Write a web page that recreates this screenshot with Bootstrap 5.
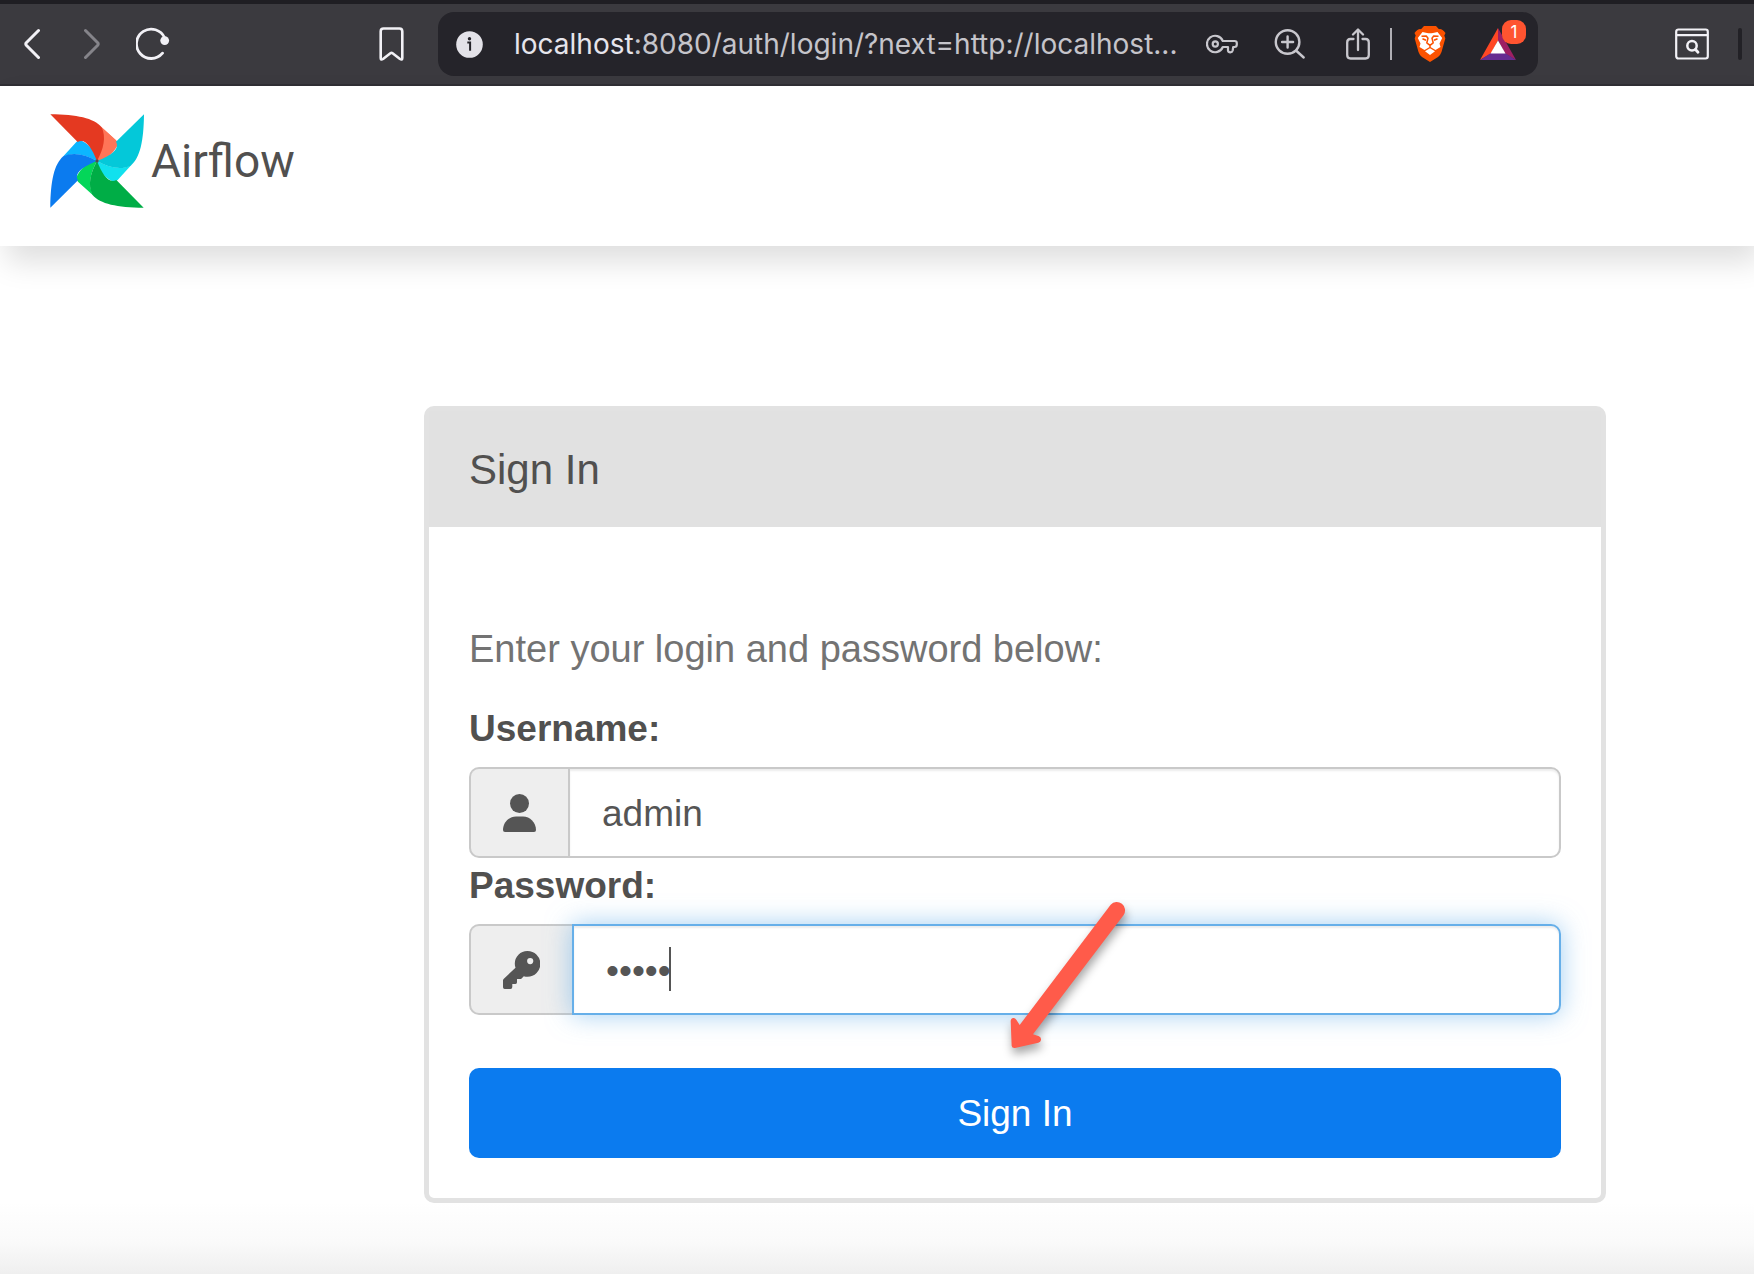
<!DOCTYPE html>
<html lang="en">
<head>
<meta charset="utf-8">
<meta name="viewport" content="width=device-width, initial-scale=1">
<title>Sign In - Airflow</title>
<link href="https://cdn.jsdelivr.net/npm/bootstrap@5.3.0/dist/css/bootstrap.min.css" rel="stylesheet">
<style>
  body { font-family: "Liberation Sans", Arial, sans-serif; color: #51504f; font-size: 37px; line-height: 52px; background: #fff; }
  svg { display: block; flex: none; }
  .icon-btn { background: none; border: 0; padding: 0; line-height: 0; }
  /* browser toolbar */
  .toolbar { background: #3b3a3f; border-top: 4px solid #1f1e23; border-bottom: 2px solid #302f34; height: 86px; }
  .tools-left { width: 404px; padding-left: 24px; margin-right: 34px; }
  .nav-pair { gap: 44px; margin-right: 36px; }
  .tools-right { width: 216px; padding-right: 12px; gap: 29px; }
  .address { background: #25242a; border-radius: 16px; height: 64px; padding: 0 22px 0 18px; min-width: 0; }
  .url-text { font-family: Inter, sans-serif; font-size: 28px; line-height: 40px; color: #c5c4ca; margin-left: 31px; }
  .url-host { color: #e6e5ec; }
  .url-tools { gap: 36px; }
  .divider { width: 2px; height: 32px; background: #b0afb5; margin: 0 22px 0 16px; }
  .edge { width: 4px; height: 32px; border-radius: 2px; background: #222126; }
  .rewards { margin-left: 34px; }
  .count { position: absolute; top: -8px; left: 22px; width: 24px; height: 24px; border-radius: 9px; background: #ff5430; color: #fff; font-family: Inter, sans-serif; font-size: 17px; line-height: 24px; text-align: center; }
  /* site header */
  .site-head { height: 160px; padding: 0 48px 10px; box-shadow: 6px 16px 28px 0 rgba(0,0,0,.13); position: relative; background: #fff; }
  .brand { color: #51504f; font-family: Roboto, sans-serif; font-size: 46px; line-height: 56px; gap: 5px; }
  /* login panel */
  .page { padding: 160px 148px 71px 424px; background: linear-gradient(to top, #efefef 0, #fafafa 32px, #fff 72px); }
  .panel { border: 5px solid #e2e2e2; border-radius: 10px; position: relative; }
  .panel-head { background: #e1e1e1; padding: 33px 40px 31px; font-size: 42px; line-height: 52px; margin: 0; font-weight: 400; }
  .panel-main { padding: 96px 40px 40px; }
  .hint { color: #737373; margin-bottom: 28px; font-size: 38px; }
  .field-label { font-weight: 700; display: block; margin-bottom: 12px; }
  .field + .field-label { margin-top: 2px; }
  .field { height: 91px; position: relative; }
  .field .input-group-text { background: #eee; border: 2px solid #c9c9c9; border-right: 0; border-radius: 10px; padding: 0 32px; color: #555; }
  .field .form-control { border: 2px solid #c9c9c9; border-radius: 0 10px 10px 0 !important; padding: 2px 32px 0; font-size: 37px; line-height: 52px; color: #555; box-shadow: inset 0 2px 2px rgba(0,0,0,.075); margin-left: 0 !important; }
  .field .form-control.active-field { border-color: #66afe9; box-shadow: inset 0 2px 2px rgba(0,0,0,.075), 0 0 26px rgba(102,175,233,.6); }
  .caret { position: absolute; left: 201px; top: 23px; width: 2px; height: 44px; background: #555; z-index: 6; }
  .sign-btn { background: #0b7bef; border: 0; border-radius: 10px; color: #fff; font-size: 37px; line-height: 52px; height: 90px; margin-top: 53px; padding: 2px 0 0; }
  .pointer { position: absolute; left: 551px; top: 469px; z-index: 7; pointer-events: none; filter: drop-shadow(1px 6px 5px rgba(0,0,0,.35)); }
</style>
<script src="https://cdn.jsdelivr.net/npm/bootstrap@5.3.0/dist/js/bootstrap.bundle.min.js"></script>
</head>
<body class="d-flex flex-column min-vh-100">

<nav class="toolbar d-flex align-items-center" aria-label="Browser toolbar">
  <div class="tools-left d-flex align-items-center flex-shrink-0">
    <div class="nav-pair d-flex">
      <button class="icon-btn" type="button" aria-label="Back"><svg width="16" height="32" viewBox="0 0 16 32" fill="none" stroke="#f2f1f6" stroke-width="3" stroke-linecap="round" stroke-linejoin="round"><path d="M14.500 2.500L2.300 14.700Q1.300 16 2.300 17.300L14.500 29.500"/></svg></button>
      <button class="icon-btn" type="button" aria-label="Forward"><svg width="16" height="32" viewBox="0 0 16 32" fill="none" stroke="#85848a" stroke-width="3" stroke-linecap="round" stroke-linejoin="round"><path d="M1.500 2.500L13.700 14.700Q14.700 16 13.700 17.300L1.500 29.500"/></svg></button>
    </div>
    <button class="icon-btn" type="button" aria-label="Reload"><svg width="34" height="34" viewBox="0 0 34 34" fill="none" stroke="#f2f1f6" stroke-width="2.800" stroke-linecap="round"><path d="M26.500 26.200A14.700 14.700 0 1 1 28.700 11"/><circle cx="28.700" cy="13.600" r="4.400" fill="#f2f1f6" stroke="none"/></svg></button>
    <button class="icon-btn ms-auto" type="button" aria-label="Bookmark"><svg width="25" height="34" viewBox="0 0 25 34" fill="none" stroke="#f2f1f6" stroke-width="2.600" stroke-linejoin="round"><path d="M4.500 1.500H20.500Q23.300 1.500 23.300 4.500V31Q23.300 33.400 21 32L13.600 26.300Q12.500 25.500 11.400 26.300L4 32Q1.700 33.400 1.700 31V4.500Q1.700 1.500 4.500 1.500Z"/></svg></button>
  </div>
  <div class="address d-flex align-items-center flex-fill">
    <svg width="27" height="27" viewBox="0 0 27 27"><circle cx="13.500" cy="13.500" r="13.300" fill="#e3e2e8"/><circle cx="13.500" cy="7.700" r="1.700" fill="#25242a"/><path d="M11.300 11.600H14.100V19.700" fill="none" stroke="#25242a" stroke-width="2"/></svg>
    <div class="url-text flex-fill text-nowrap overflow-hidden" role="textbox" aria-label="Address"><span class="url-host">localhost</span>:8080/auth/login/?next=http://localhost...</div>
    <div class="url-tools d-flex align-items-center">
      <button class="icon-btn" type="button" aria-label="Passwords"><svg width="32" height="20" viewBox="0 0 32 20" fill="none" stroke="#c8c7cd" stroke-width="2.200" stroke-linejoin="round"><circle cx="9.300" cy="10" r="2.600"/><path d="M16.800 7A8.200 8.200 0 1 0 16.800 13H22V16.500Q22.300 18.300 24.300 18.300Q26.200 18.300 26.700 16.500L27.200 13H28.500Q30.800 13 30.800 10.500V9Q30.800 7 28.500 7Z"/></svg></button>
      <button class="icon-btn" type="button" aria-label="Zoom"><svg width="32" height="32" viewBox="0 0 32 32" fill="none" stroke="#c8c7cd" stroke-width="2.400" stroke-linecap="round"><circle cx="13.600" cy="14" r="11.800"/><path d="M22 22.500L29.700 29.500M13.600 8.500V19.500M8.100 14H19.100"/></svg></button>
      <button class="icon-btn" type="button" aria-label="Share"><svg width="32" height="32" viewBox="0 0 32 32" fill="none" stroke="#c8c7cd" stroke-width="2.300" stroke-linecap="round" stroke-linejoin="round"><path d="M11.500 11H8.500Q5.200 11 5.200 14.500V27Q5.200 30.500 8.500 30.500H23.500Q26.800 30.500 26.800 27V14.500Q26.800 11 23.500 11H20.500M16 22V1.800M11 6.500L16 1.500L21 6.500"/></svg></button>
    </div>
    <div class="divider"></div>
    <button class="icon-btn" type="button" aria-label="Brave Shields"><svg width="32" height="36" viewBox="0 0 32 36"><path d="M10 0H22L25 3.200Q28 2.500 31.500 7L30.300 9.500L31.300 12.500L27.500 26Q26.500 29 24 31L16 36L8 31Q5.500 29 4.500 26L.700 12.500L1.700 9.500L.500 7Q4 2.500 7 3.200Z" fill="#fb5200"/><path d="M3.800 12L8.500 6L13 7Q16 7.600 19 7L23.500 6L28.200 12L25.500 17.500L26.500 21L21.500 24L16 20.800L10.500 24L5.500 21L6.500 17.500Z" fill="#fff"/><path d="M16 22.300L21 25.300L16 29L11 25.300Z" fill="#fff"/><path d="M7.500 10.300L12.300 10L14 12.300L12.800 16.800L16 19.300L19.200 16.800L18 12.300L19.700 10L24.500 10.300M8.500 12.800L12 14.300M23.500 12.800L20 14.300M16 19.300V21.500" fill="none" stroke="#fb5200" stroke-width="1.500" stroke-linejoin="round"/></svg></button>
    <button class="icon-btn rewards position-relative" type="button" aria-label="Brave Rewards, 1 notification"><svg width="36" height="32" viewBox="0 0 36 32"><path d="M18 0L0 32L11 25.500L18 12.500Z" fill="#ff4724"/><path d="M18 0L36 32L25 25.500L18 12.500Z" fill="#9e1f63"/><path d="M0 32H36L25 25H11Z" fill="#662d91"/><path d="M18 12.500L25.500 25.500H10.500Z" fill="#fff"/></svg><span class="count">1</span></button>
  </div>
  <div class="tools-right d-flex align-items-center justify-content-end flex-shrink-0">
    <button class="icon-btn" type="button" aria-label="Search page"><svg width="34" height="32" viewBox="0 0 34 32" fill="none" stroke="#f2f1f6" stroke-width="2.200" stroke-linecap="round"><rect x="1.200" y="1.500" width="31.600" height="29" rx="2.200"/><path d="M2 7.200H32"/><circle cx="17" cy="17.800" r="4.700" stroke-width="2.500"/><path d="M20.500 21.500L23 24.200" stroke-width="2.800"/></svg></button>
    <div class="edge"></div>
  </div>
</nav>

<header class="site-head d-flex align-items-center">
  <a class="brand d-flex align-items-center text-decoration-none" href="#">
    <svg width="98" height="98" viewBox="53 64 294 294" aria-hidden="true">
      <defs>
        <path id="blade" d="M60 71C140 72 190 82 214 110C228 140 220 175 200 211C183 168 164 142 142 154Z"/>
        <path id="fold" d="M212 108L257 149Q264 157 260 166C249 189 225 211 200 211C220 175 228 140 212 108Z"/>
      </defs>
      <use href="#fold" fill="#ff7557"/>
      <use href="#fold" fill="#11e1ee" transform="rotate(90 200 211)"/>
      <use href="#fold" fill="#04d659" transform="rotate(180 200 211)"/>
      <use href="#fold" fill="#0cb6ff" transform="rotate(270 200 211)"/>
      <path id="lip" d="M262 157C262 176 238 186 200 211L214 110L257 149Z" fill="#ff7557"/>
      <use href="#blade" fill="#e43921"/>
      <path d="M341 71C340 151 330 201 301 225C271 239 236 231 200 211C243 194 269 175 257 153Z" fill="#04c8d9"/>
      <use href="#blade" fill="#00ad46" transform="rotate(180 200 211)"/>
      <use href="#blade" fill="#0b7bef" transform="rotate(270 200 211)"/>
      <circle cx="200" cy="211" r="5" fill="#51504f"/>
    </svg>
    <span>Airflow</span>
  </a>
</header>

<main class="page flex-fill">
  <section class="panel">
    <h1 class="panel-head">Sign In</h1>
    <form class="panel-main">
      <p class="hint">Enter your login and password below:</p>
      <label class="field-label" for="username">Username:</label>
      <div class="input-group field flex-nowrap">
        <span class="input-group-text"><svg width="33" height="38" viewBox="0 0 33 38" fill="currentColor"><circle cx="16.500" cy="9.500" r="9.500"/><path d="M13 22.500H20C27 22.500 33 28.500 33 36Q33 38 31 38H2Q0 38 0 36C0 28.500 6 22.500 13 22.500Z"/></svg></span>
        <input class="form-control" id="username" type="text" value="admin">
      </div>
      <label class="field-label" for="password">Password:</label>
      <div class="input-group field flex-nowrap">
        <span class="input-group-text"><svg width="37" height="38" viewBox="0 0 37 38" fill="currentColor"><path fill-rule="evenodd" d="M24.500 0A12.600 12.600 0 0 1 24.500 25.700Q22.500 25.700 20.800 25.200L18.600 27.500Q18 28 17.300 28H14V31.300Q14 33 12.500 33H9.300V36Q9.300 38 7.500 38H1.700Q0 38 0 36.300V29.500Q0 28.700 .600 28L12.500 16.700Q11.800 14.800 11.800 12.800A12.600 12.600 0 0 1 24.500 0ZM27.200 7A3.100 3.100 0 1 0 27.200 13.200A3.100 3.100 0 1 0 27.200 7Z"/></svg></span>
        <input class="form-control active-field" id="password" type="password" value="admin">
        <span class="caret"></span>
      </div>
      <button class="btn sign-btn w-100" type="submit">Sign In</button>
    </form>
    <svg class="pointer" width="180" height="190" viewBox="0 0 540 570" aria-hidden="true"><path d="M392 74A25 25 0 0 1 431 105L159 463L177 469Q184 472 183 480Q182 486 175 488L105 504Q96 505 95 497L92 424Q92 415 100 414Q105 413 109 419L119 435Z" fill="#ff5b4a"/></svg>
  </section>
</main>
</body>
</html>
